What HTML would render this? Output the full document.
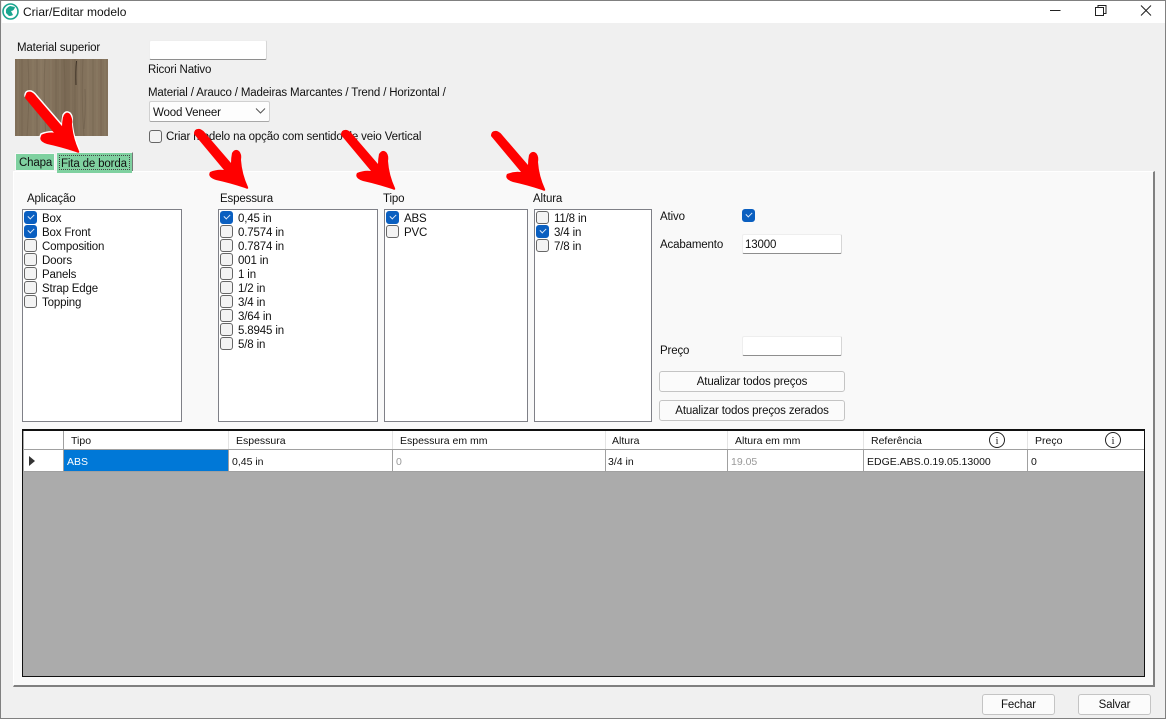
<!DOCTYPE html>
<html><head><meta charset="utf-8"><title>Criar/Editar modelo</title>
<style>
html,body{margin:0;padding:0;background:#fff}
body{width:1172px;height:726px;position:relative;overflow:hidden;font-family:"Liberation Sans",sans-serif;font-size:11.5px;letter-spacing:-.15px;color:#111}
.a{position:absolute}
.t{position:absolute;white-space:nowrap;line-height:14px;margin-top:1px}
.inp{position:absolute;background:#fff;border-bottom:1px solid #8e8e8e;border-right:1px solid #d6d6d6;box-sizing:border-box;border-top:1px solid #eee;border-left:1px solid #eee;border-radius:2px}
.btn{position:absolute;background:#fbfbfb;border:1px solid #c4c4c4;border-radius:3px;box-sizing:border-box;text-align:center;line-height:20px;font-size:11.5px}
.list{position:absolute;background:#fff;border:1px solid #7f8087;box-sizing:border-box;top:209px;height:213px}
.cb{position:absolute;width:13px;height:13px;box-sizing:border-box;border:1px solid #666;border-radius:3px;background:#f3f3f3}
.cb.on{background:#0a5fc0;border-color:#0a5fc0}
.cb.on:after{content:"";position:absolute;left:3px;top:2px;width:5px;height:3px;border-left:1px solid #dfeaf8;border-bottom:1px solid #dfeaf8;transform:rotate(-45deg)}
.th,.td{position:absolute;white-space:nowrap;font-size:10.5px;line-height:14px;letter-spacing:0;margin-top:1px}
.v{position:absolute;width:1px}
</style></head><body>
<!-- window -->
<div class="a" style="left:0;top:0;width:1166px;height:719px;box-sizing:border-box;border:1px solid #808080;border-width:1px 1.5px 1.5px 1.5px;background:#f0f0f0"></div>
<div class="a" style="left:2px;top:1px;width:1163px;height:22px;background:#fff"></div>
<svg class="a" style="left:2px;top:3px" width="17" height="17" viewBox="0 0 17 17"><circle cx="8.5" cy="8.5" r="7.5" fill="#fff" stroke="#1aa58f" stroke-width="1.6"/><path d="M4 10Q3 5 8 3L13 4Q12 8 9 8L11 12Q7 14 6 12Z" fill="#1aa58f"/></svg>
<div class="t" style="left:23px;top:4px;font-size:12px;letter-spacing:0">Criar/Editar modelo</div>
<svg class="a" style="left:1040px;top:0" width="120" height="22" viewBox="0 0 120 22" fill="none" stroke="#222" stroke-width="1"><path d="M10 10.5H20.500"/><path d="M55.500 7.500h8v8h-8zM58 7.500V5.500h8v8h-2"/><path d="M101 5.500l10 10M111 5.500l-10 10"/></svg>

<div class="t" style="left:17px;top:40px">Material superior</div>
<!-- wood -->
<svg class="a" style="left:15px;top:59px" width="93" height="77" viewBox="0 0 93 77">
<defs><linearGradient id="w" x1="0" x2="1" y1="0" y2="0"><stop offset="0" stop-color="#7f6e58"/><stop offset=".3" stop-color="#877660"/><stop offset=".55" stop-color="#7a6954"/><stop offset=".8" stop-color="#85745e"/><stop offset="1" stop-color="#82715b"/></linearGradient></defs>
<rect width="93" height="77" fill="url(#w)"/>
<g fill="none" stroke-width="1">
<path d="M7 0V77M13 0Q15 40 12 77M22 0V77M30 0Q28 40 31 77M41 0V77M49 0Q51 40 49 77M60 0V77M68 0Q66 40 69 77M78 0V77M86 0V77" stroke="#6a5a47" opacity=".45"/>
<path d="M3 0V77M18 0V77M26 0V77M36 0V77M45 0V77M56 0V77M64 0V77M73 0V77M82 0V77M90 0V77" stroke="#97866e" opacity=".4"/>
<path d="M61.500 2Q60.500 12 61 26" stroke="#3f3327" stroke-width="1"/>
<path d="M70 30Q71 50 69 70" stroke="#5f4f3e" opacity=".35"/>
</g></svg>

<div class="inp" style="left:149px;top:40px;width:118px;height:20px"></div>
<div class="t" style="left:148px;top:62px">Ricori Nativo</div>
<div class="t" style="left:148px;top:84.500px">Material / Arauco / Madeiras Marcantes / Trend / Horizontal /</div>
<div class="a" style="left:149px;top:101px;width:121px;height:21px;box-sizing:border-box;background:#fdfdfd;border:1px solid #d0d0d0;border-bottom-color:#a8a8a8;border-radius:2px"></div>
<div class="t" style="left:153px;top:105px">Wood Veneer</div>
<svg class="a" style="left:255px;top:107px" width="12" height="8" fill="none" stroke="#555"><path d="M1 1.500L5.500 6 10 1.500"/></svg>
<div class="cb" style="left:149px;top:130px"></div>
<div class="t" style="left:166px;top:129px">Criar modelo na opção com sentido de veio Vertical</div>

<!-- tabs -->
<div class="a" style="left:15px;top:153px;width:40px;height:18px;background:#7fd1a0;border:1px solid #f8f8f8;box-sizing:border-box"></div>
<div class="t" style="left:19px;top:155px">Chapa</div>
<div class="a" style="left:56px;top:152px;width:77px;height:21px;background:#7fd1a0;border:1px solid #f4f4f4;border-right:1.500px solid #777;box-sizing:border-box"></div>
<div class="a" style="left:59px;top:155px;width:71px;height:15px;border:1px dotted #444;box-sizing:border-box"></div>
<div class="t" style="left:61px;top:156px">Fita de borda</div>

<!-- panel -->
<div class="a" style="left:13px;top:171px;width:1142px;height:516px;box-sizing:border-box;background:#f9f9f9;border:1px solid #fff;border-right:2px solid #808080;border-bottom:2px solid #808080;outline:0"></div>
<div class="a" style="left:57px;top:171px;width:75px;height:2px;background:#7fd1a0"></div>

<div class="t" style="left:27px;top:191px">Aplicação</div>
<div class="t" style="left:220px;top:191px">Espessura</div>
<div class="t" style="left:383px;top:191px">Tipo</div>
<div class="t" style="left:533px;top:191px">Altura</div>

<div class="list" style="left:22px;width:160px"></div>
<div class="cb on" style="left:24px;top:211px"></div><div class="t" style="left:42px;top:211px">Box</div>
<div class="cb on" style="left:24px;top:225px"></div><div class="t" style="left:42px;top:225px">Box Front</div>
<div class="cb" style="left:24px;top:239px"></div><div class="t" style="left:42px;top:239px">Composition</div>
<div class="cb" style="left:24px;top:253px"></div><div class="t" style="left:42px;top:253px">Doors</div>
<div class="cb" style="left:24px;top:267px"></div><div class="t" style="left:42px;top:267px">Panels</div>
<div class="cb" style="left:24px;top:281px"></div><div class="t" style="left:42px;top:281px">Strap Edge</div>
<div class="cb" style="left:24px;top:295px"></div><div class="t" style="left:42px;top:295px">Topping</div>

<div class="list" style="left:218px;width:160px"></div>
<div class="cb on" style="left:220px;top:211px"></div><div class="t" style="left:238px;top:211px">0,45 in</div>
<div class="cb" style="left:220px;top:225px"></div><div class="t" style="left:238px;top:225px">0.7574 in</div>
<div class="cb" style="left:220px;top:239px"></div><div class="t" style="left:238px;top:239px">0.7874 in</div>
<div class="cb" style="left:220px;top:253px"></div><div class="t" style="left:238px;top:253px">001 in</div>
<div class="cb" style="left:220px;top:267px"></div><div class="t" style="left:238px;top:267px">1 in</div>
<div class="cb" style="left:220px;top:281px"></div><div class="t" style="left:238px;top:281px">1/2 in</div>
<div class="cb" style="left:220px;top:295px"></div><div class="t" style="left:238px;top:295px">3/4 in</div>
<div class="cb" style="left:220px;top:309px"></div><div class="t" style="left:238px;top:309px">3/64 in</div>
<div class="cb" style="left:220px;top:323px"></div><div class="t" style="left:238px;top:323px">5.8945 in</div>
<div class="cb" style="left:220px;top:337px"></div><div class="t" style="left:238px;top:337px">5/8 in</div>

<div class="list" style="left:384px;width:144px"></div>
<div class="cb on" style="left:386px;top:211px"></div><div class="t" style="left:404px;top:211px">ABS</div>
<div class="cb" style="left:386px;top:225px"></div><div class="t" style="left:404px;top:225px">PVC</div>

<div class="list" style="left:534px;width:118px"></div>
<div class="cb" style="left:536px;top:211px"></div><div class="t" style="left:554px;top:211px">11/8 in</div>
<div class="cb on" style="left:536px;top:225px"></div><div class="t" style="left:554px;top:225px">3/4 in</div>
<div class="cb" style="left:536px;top:239px"></div><div class="t" style="left:554px;top:239px">7/8 in</div>

<div class="t" style="left:660px;top:209px">Ativo</div>
<div class="cb on" style="left:742px;top:209px"></div>
<div class="t" style="left:660px;top:237px">Acabamento</div>
<div class="inp" style="left:742px;top:234px;width:100px;height:20px"></div>
<div class="t" style="left:745px;top:237px">13000</div>
<div class="t" style="left:660px;top:343px">Preço</div>
<div class="inp" style="left:742px;top:336px;width:100px;height:20px"></div>
<div class="btn" style="left:659px;top:371px;width:186px;height:21px">Atualizar todos preços</div>
<div class="btn" style="left:659px;top:400px;width:186px;height:21px">Atualizar todos preços zerados</div>

<!-- grid -->
<div class="a" style="left:22px;top:429px;width:1123px;height:248px;box-sizing:border-box;background:#ababab;border:1px solid #111;border-width:2px 1.500px 1.500px 1.500px"></div>
<div class="a" style="left:24px;top:431px;width:1120px;height:41px;background:#fff"></div>
<div class="a" style="left:24px;top:449px;width:1120px;height:1px;background:#a0a0a0"></div>
<div class="a" style="left:24px;top:471px;width:1120px;height:1px;background:#a0a0a0"></div>
<div class="v" style="left:63px;top:431px;height:41px;background:#a0a0a0"></div>
<div class="v" style="left:228px;top:431px;height:18px;background:#e4e4e4"></div><div class="v" style="left:228px;top:450px;height:21px;background:#a0a0a0"></div>
<div class="v" style="left:392px;top:431px;height:18px;background:#e4e4e4"></div><div class="v" style="left:392px;top:450px;height:21px;background:#a0a0a0"></div>
<div class="v" style="left:605px;top:431px;height:18px;background:#e4e4e4"></div><div class="v" style="left:605px;top:450px;height:21px;background:#a0a0a0"></div>
<div class="v" style="left:727px;top:431px;height:18px;background:#e4e4e4"></div><div class="v" style="left:727px;top:450px;height:21px;background:#a0a0a0"></div>
<div class="v" style="left:863px;top:431px;height:18px;background:#e4e4e4"></div><div class="v" style="left:863px;top:450px;height:21px;background:#a0a0a0"></div>
<div class="v" style="left:1027px;top:431px;height:18px;background:#e4e4e4"></div><div class="v" style="left:1027px;top:450px;height:21px;background:#a0a0a0"></div>
<div class="a" style="left:64px;top:450px;width:164px;height:21px;background:#0078d7"></div>
<svg class="a" style="left:29px;top:456px" width="8" height="11"><path d="M0 0L6 5 0 10Z" fill="#333"/></svg>
<div class="th" style="left:71px;top:433px">Tipo</div>
<div class="th" style="left:236px;top:433px">Espessura</div>
<div class="th" style="left:400px;top:433px">Espessura em mm</div>
<div class="th" style="left:612px;top:433px">Altura</div>
<div class="th" style="left:735px;top:433px">Altura em mm</div>
<div class="th" style="left:871px;top:433px">Referência</div>
<div class="th" style="left:1035px;top:433px">Preço</div>
<svg class="a" style="left:988px;top:431px" width="18" height="18"><circle cx="9" cy="9" r="7.500" fill="#fff" stroke="#222"/><text x="9" y="13" text-anchor="middle" font-family="Liberation Serif,serif" font-size="11" fill="#222">i</text></svg>
<svg class="a" style="left:1104px;top:431px" width="18" height="18"><circle cx="9" cy="9" r="7.500" fill="#fff" stroke="#222"/><text x="9" y="13" text-anchor="middle" font-family="Liberation Serif,serif" font-size="11" fill="#222">i</text></svg>
<div class="td" style="left:67px;top:454px;color:#fff">ABS</div>
<div class="td" style="left:232px;top:454px">0,45 in</div>
<div class="td" style="left:396px;top:454px;color:#999">0</div>
<div class="td" style="left:608px;top:454px">3/4 in</div>
<div class="td" style="left:731px;top:454px;color:#999">19.05</div>
<div class="td" style="left:867px;top:454px">EDGE.ABS.0.19.05.13000</div>
<div class="td" style="left:1031px;top:454px">0</div>

<div class="btn" style="left:982px;top:694px;width:73px;height:21px">Fechar</div>
<div class="btn" style="left:1078px;top:694px;width:73px;height:21px">Salvar</div>

<!-- arrows -->
<svg class="a" style="left:0;top:0;pointer-events:none" width="1172" height="726" viewBox="0 0 1172 726">
<defs><g id="ar"><path d="M-1 4Q-1 -2 5 -1Q8 0 11 4L36 33Q36 28 37 23Q40 18 44 21Q47 24 46 30Q47 44 53 57Q54 60 50 58Q35 53 21 50Q12 47 15 42Q22 39 29 40Z"/></g></defs>
<use href="#ar" transform="translate(26,92)" fill="#f00" stroke="#fff" stroke-width="1.500"/>
<use href="#ar" transform="translate(26,94)" fill="#f00"/>
<use href="#ar" transform="translate(195,130)" fill="#f00"/>
<use href="#ar" transform="translate(342,131)" fill="#f00"/>
<use href="#ar" transform="translate(492,132)" fill="#f00"/>
</svg>
</body></html>
